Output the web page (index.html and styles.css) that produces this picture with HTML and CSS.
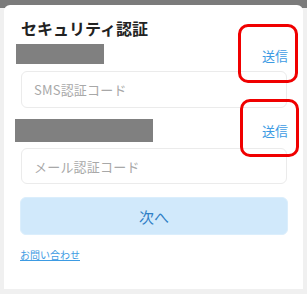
FILE: index.html
```html
<!DOCTYPE html>
<html lang="ja">
<head>
<meta charset="utf-8">
<link rel="stylesheet" href="styles.css">
</head>
<body>
<div class="card">
  <h1 class="title">セキュリティ認証</h1>
  <div class="row row-sms">
    <span class="redact redact-sms"></span>
    <a class="send">送信</a>
  </div>
  <div class="field field-sms"><span class="ph">SMS認証コード</span></div>
  <div class="row row-mail">
    <span class="redact redact-mail"></span>
    <a class="send">送信</a>
  </div>
  <div class="field field-mail"><span class="ph">メール認証コード</span></div>
  <button class="next">次へ</button>
  <a class="contact">お問い合わせ</a>
</div>
<div class="mark mark-1"></div>
<div class="mark mark-2"></div>
</body>
</html>
```
FILE: styles.css
```css
html, body {
  margin: 0;
  padding: 0;
}
body {
  width: 307px;
  height: 294px;
  overflow: hidden;
  position: relative;
  background: linear-gradient(#7b7b7b 0, #7b7b7b 8px, #f0f0f0 8px);
  font-family: "Noto Sans CJK JP", "Noto Sans", sans-serif;
}
.card {
  box-sizing: border-box;
  margin: 5px 4px 0 4px;
  height: 284px;
  background: #fff;
  border-radius: 6px 6px 0 0;
  padding: 11px 16px 0 17px;
  display: flex;
  flex-direction: column;
}
.title {
  margin: 0;
  font-size: 16px;
  line-height: 24px;
  font-weight: 700;
  color: #222;
}
.row {
  display: flex;
  align-items: center;
  justify-content: space-between;
}
.row-sms {
  margin-top: 4px;
  margin-left: -5px;
  height: 20px;
}
.row-mail {
  margin-top: 11px;
  margin-left: -6px;
  height: 23px;
}
.redact {
  display: block;
  background: #808080;
  height: 100%;
}
.redact-sms { width: 88px; }
.redact-mail { width: 138px; }
.send {
  font-size: 13px;
  line-height: 16px;
  color: #3d9be3;
  margin-top: 3px;
  margin-right: -1px;
}
.row-mail .send { margin-top: 1px; }
.field {
  box-sizing: border-box;
  border: 1px solid #ebebeb;
  border-radius: 6px;
  display: flex;
  align-items: center;
  padding-left: 12px;
}
.field-sms {
  margin-top: 7px;
  height: 37px;
}
.field-mail {
  margin-top: 6px;
  height: 36px;
}
.ph {
  font-size: 13px;
  color: #a8a8a8;
  letter-spacing: 0.2px;
}
.next {
  box-sizing: border-box;
  margin: 13px 0 0 -1px;
  width: 268px;
  height: 38px;
  border: 1px solid #dbeefc;
  border-radius: 6px;
  background: #d1e9fb;
  color: #2f7fc6;
  font-family: inherit;
  font-size: 15px;
  padding: 0;
}
.contact {
  margin-top: 12px;
  margin-left: -1px;
  font-size: 10px;
  line-height: 15px;
  color: #3d9be3;
  text-decoration: underline;
  align-self: flex-start;
}
.mark {
  position: absolute;
  box-sizing: border-box;
  border: 3px solid #f00000;
  border-radius: 10px;
}
.mark-1 {
  left: 238px;
  top: 24px;
  width: 60px;
  height: 59px;
}
.mark-2 {
  left: 240px;
  top: 99px;
  width: 59px;
  height: 58px;
}
```
